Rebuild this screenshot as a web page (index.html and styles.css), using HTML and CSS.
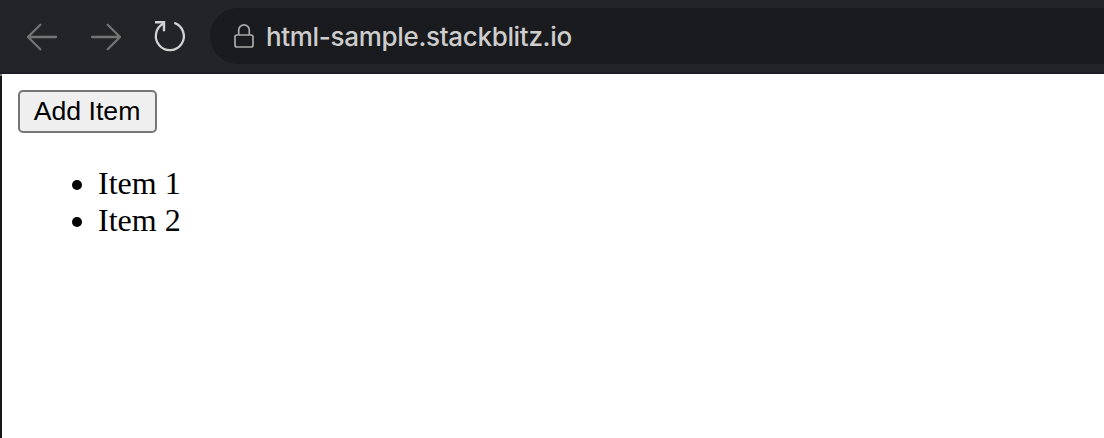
FILE: index.html
```html
<!DOCTYPE html>
<html lang="en">
<head>
<meta charset="utf-8">
<title>html-sample.stackblitz.io</title>
<link rel="stylesheet" href="styles.css">
</head>
<body>
<header class="toolbar">
  <svg class="nav" viewBox="0 0 220 74" fill="none" stroke-width="2.300">
    <g stroke="#747474" stroke-linecap="round" stroke-linejoin="round">
      <path d="M56 37H28M40.3 24.8L28 37l12.3 12.2"/>
      <path d="M92 37h28M107.700 24.800L120 37l-12.300 12.200"/>
    </g>
    <path d="M174.300 22.800A14 14 0 1 1 163.500 23.600" stroke="#d2d2d2" stroke-width="2.300"/>
    <path d="M155 22.200h9v9" stroke="#d2d2d2" stroke-width="2.400"/>
  </svg>
  <div class="address">
    <svg class="lock" viewBox="0 0 20 24" fill="none" stroke="#a9a9a9" stroke-width="1.700">
      <rect x="1" y="11" width="18" height="12" rx="2"/>
      <path d="M4.700 11V6.200a5.300 5.300 0 0 1 10.600 0V11"/>
    </svg>
    <span class="url">html-sample.stackblitz.io</span>
  </div>
</header>
<main class="page">
  <button class="add" type="button">Add Item</button>
  <ul class="items">
    <li class="item">Item 1</li>
    <li class="item">Item 2</li>
  </ul>
</main>
</body>
</html>
```
FILE: styles.css
```css
* { box-sizing: border-box; }
body { margin: 0; height: 438px; overflow: hidden; background: #fff; }
.toolbar {
  display: flex;
  height: 74px;
  background: linear-gradient(#232428 71px, #1c1d24 73px);
}
.nav { flex: none; width: 220px; height: 74px; margin-right: -10px; }
.address {
  flex: 1;
  display: flex;
  align-items: center;
  height: 56px;
  margin-top: 8px;
  padding-left: 24px;
  border-radius: 28px 0 0 28px;
  background: #1a1b1e;
}
.lock { width: 20px; height: 24px; margin-right: 12px; }
.url {
  padding-top: 2px;
  color: #cdcdcd;
  font: 500 26px/32px Inter, sans-serif;
  letter-spacing: -0.32px;
  white-space: nowrap;
}
.page {
  height: 364px;
  padding: 16px;
  border-left: 2px solid;
  border-image: linear-gradient(#777 4px, #17181c 4px) 2;
  border-image-width: 0 0 0 2px;
}
.add {
  display: block;
  width: 139px;
  height: 43px;
  padding: 0 1px 2px 0;
  border: 2px solid #767676;
  border-radius: 5px;
  background: #efefef;
  color: #000;
  font: 26.67px/36px "Liberation Sans", Arial, sans-serif;
}
.items {
  margin: 32px 0 0;
  padding-left: 80px;
  font: 32px/37px "Liberation Serif", "Times New Roman", serif;
}
```
